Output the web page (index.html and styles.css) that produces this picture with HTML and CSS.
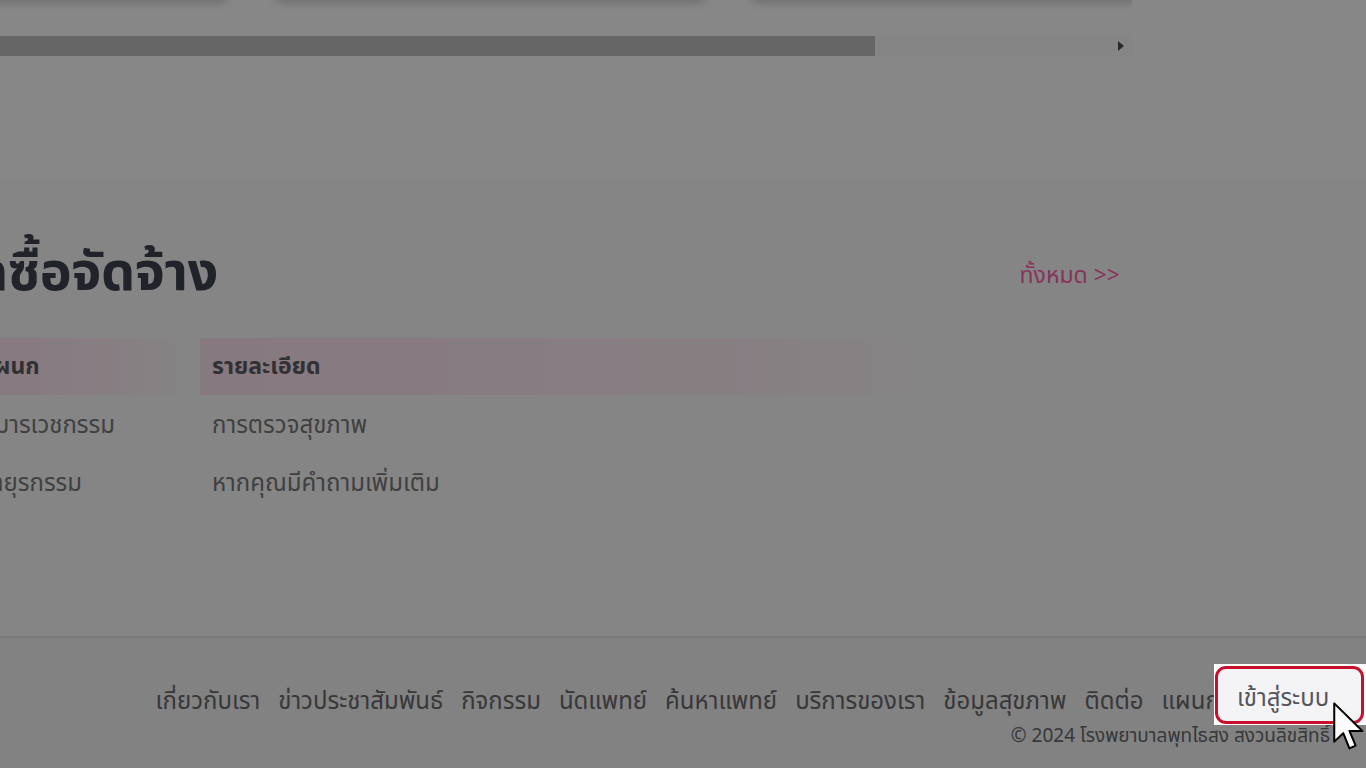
FILE: index.html
```html
<!DOCTYPE html>
<html lang="th">
<head>
<meta charset="utf-8">
<title>โรงพยาบาลพุทไธสง</title>
<link rel="stylesheet" href="styles.css">
</head>
<body>
<div class="page">
  <section class="top">
    <div class="scroller">
      <div class="cards">
        <div class="card"></div>
        <div class="card"></div>
        <div class="card"></div>
      </div>
      <div class="hscroll">
        <div class="thumb"></div>
        <div class="track">
          <span class="arrow"></span>
        </div>
      </div>
    </div>
  </section>

  <section class="procure">
    <div class="procure-head">
      <h2 class="title">ประกาศจัดซื้อจัดจ้าง</h2>
      <a class="all" href="#">ทั้งหมด &gt;&gt;</a>
    </div>
    <div class="table">
      <div class="th c1">แผนก</div>
      <div class="th c2">รายละเอียด</div>
      <div class="td c1">กุมารเวชกรรม</div>
      <div class="td c2">การตรวจสุขภาพ</div>
      <div class="td c1">อายุรกรรม</div>
      <div class="td c2">หากคุณมีคำถามเพิ่มเติม</div>
    </div>
  </section>

  <footer class="footer">
    <nav class="links">
      <a href="#">เกี่ยวกับเรา</a>
      <a href="#">ข่าวประชาสัมพันธ์</a>
      <a href="#">กิจกรรม</a>
      <a href="#">นัดแพทย์</a>
      <a href="#">ค้นหาแพทย์</a>
      <a href="#">บริการของเรา</a>
      <a href="#">ข้อมูลสุขภาพ</a>
      <a href="#">ติดต่อ</a>
      <a href="#">แผนก</a>
      <a href="#" class="login">เข้าสู่ระบบ</a>
    </nav>
    <p class="copy">© 2024 โรงพยาบาลพุทไธสง สงวนลิขสิทธิ์</p>
  </footer>
</div>

<div class="backdrop"></div>
<div class="spot">
  <div class="spot-inner">เข้าสู่ระบบ</div>
</div>
<svg class="cursor" width="36" height="52" viewBox="0 0 32 46">
  <path d="M2 2 L2 36 L10 28.5 L15.5 42 L21 39.5 L15.5 26.5 L27 26.5 Z" fill="#fff" stroke="#000" stroke-width="1.8" stroke-linejoin="round"/>
</svg>
</body>
</html>
```

FILE: styles.css
```css
* { box-sizing: border-box; }
html, body {
  margin: 0;
  padding: 0;
  width: 1366px;
  height: 768px;
  overflow: hidden;
  background: #fff;
  font-family: "Noto Sans Thai", "Noto Sans", "Liberation Sans", sans-serif;
}
.page {
  width: 1366px;
}

/* top carousel remains */
.top {
  height: 200px;
  background: #fff;
  margin-top: -20px;
}
.scroller {
  width: 1334px;
  margin-left: -202px;
  overflow: hidden;
  padding-bottom: 4px;
}
.cards {
  display: flex;
  gap: 47px;
  height: 20px;
}
.card {
  flex: 0 0 430px;
  height: 20px;
  background: #fff;
  box-shadow: 0 3px 8px rgba(0,0,0,0.18);
  border-radius: 0 0 6px 6px;
}
.hscroll {
  display: flex;
  height: 21px;
  margin-top: 35px;
  background: #f6f6f6;
  border-top: 1px solid #f9f9f9;
}
.thumb {
  width: 1077px;
  background: #c1c1c1;
}
.track {
  flex: 1;
  background: #fbfbfb;
  display: flex;
  align-items: center;
  justify-content: flex-end;
  padding-right: 8px;
}
.arrow {
  width: 0;
  height: 0;
  border-top: 5px solid transparent;
  border-bottom: 5px solid transparent;
  border-left: 6px solid #505050;
}

/* procurement */
.procure {
  height: 456px;
  background: #fcfcfc;
  padding-top: 50px;
}
.procure-head {
  display: flex;
  align-items: center;
  justify-content: space-between;
  width: 1164px;
  margin-left: -32px;
  padding-right: 12px;
  height: 86px;
}
.title {
  margin: 0 0 0 -195px;
  font-size: 54px;
  font-weight: 700;
  color: #3f4350;
  letter-spacing: -0.5px;
}
.all {
  color: #ff62b0;
  text-decoration: none;
  font-size: 23px;
  margin-top: 6px;
}
.table {
  display: grid;
  grid-template-columns: 232px 760px;
  margin-left: -32px;
  margin-top: 22px;
}
.th, .td {
  padding: 0 12px;
  display: flex;
  align-items: center;
  font-size: 24px;
}
.th {
  height: 57px;
  font-weight: 700;
  font-size: 23px;
  color: #5e5e62;
}
.th.c1 { background: linear-gradient(to right, #ffe4f1 0%, #ffeef6 60%, #fbfbfb 100%); }
.th.c2 { background: linear-gradient(to right, #ffe4f1 0%, #fff0f7 72%, #fcfcfc 100%); }
.td {
  height: 58px;
  color: #7a7a7c;
  padding-top: 3px;
}

/* footer */
.footer {
  border-top: 2px solid #e7e7e7;
  background: #f5f5f5;
  height: 140px;
  padding-top: 46px;
  padding-right: 36px;
  text-align: right;
}
.links {
  display: flex;
  justify-content: flex-end;
  gap: 18px;
}
.links a {
  color: #6a6a6e;
  text-decoration: none;
  font-size: 24px;
}
.copy {
  margin: 2px 0 0;
  font-size: 19px;
  color: #6a6a6e;
}

/* tour overlay */
.backdrop {
  position: fixed;
  inset: 0;
  background: rgba(0,0,0,0.47);
}
.spot {
  position: absolute;
  left: 1214px;
  top: 664px;
  width: 152px;
  height: 61px;
  background: #fff;
  padding: 2px 2px 1px 1px;
}
.spot-inner {
  height: 100%;
  border: 3px solid #c8102e;
  border-radius: 11px;
  background: #f4f4f6;
  display: flex;
  align-items: center;
  font-size: 24px;
  color: #55565c;
  padding: 8px 0 0 19px;
}
.cursor {
  position: absolute;
  left: 1332px;
  top: 701px;
}
```
